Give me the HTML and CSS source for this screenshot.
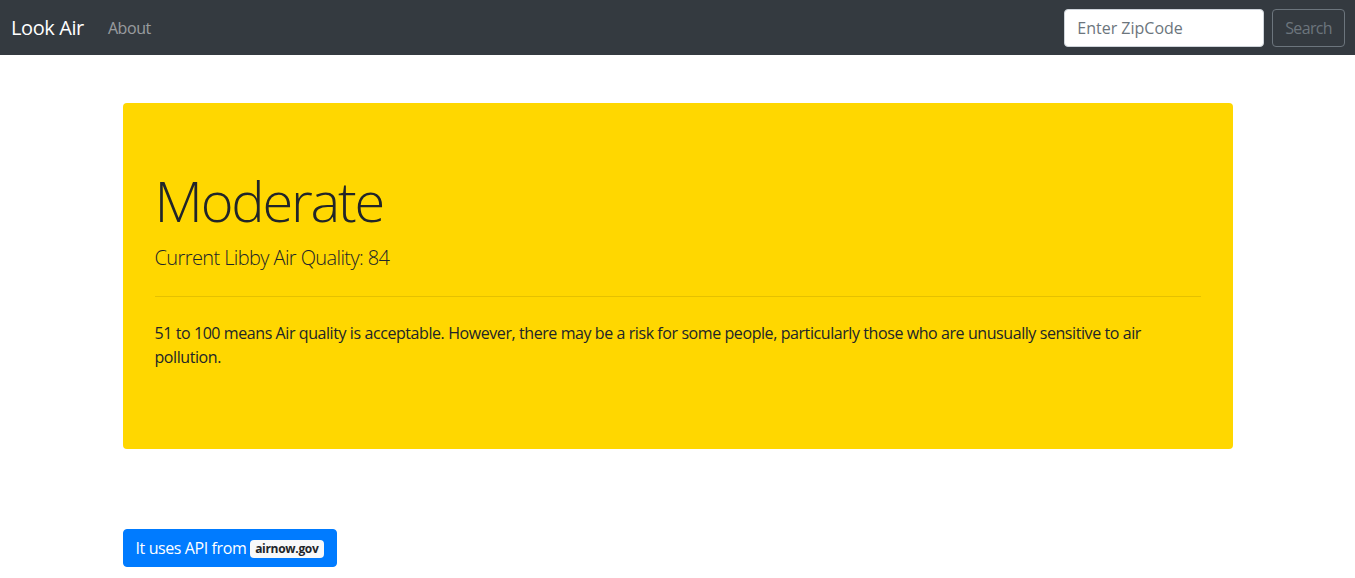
FILE: index.html
```html
<!DOCTYPE html>
<html lang="en">
<head>
<meta charset="utf-8">
<title>Look Air</title>
<link rel="stylesheet" href="styles.css">
</head>
<body>
<nav class="navbar">
  <a class="brand" href="#">Look Air</a>
  <ul class="nav">
    <li><a class="nav-link" href="#">About</a></li>
  </ul>
  <form class="search">
    <input class="zip" type="text" placeholder="Enter ZipCode">
    <button class="btn-search" type="button">Search</button>
  </form>
</nav>
<main class="container">
  <section class="jumbotron">
    <h1 class="display">Moderate</h1>
    <p class="lead">Current Libby Air Quality: 84</p>
    <hr class="divider">
    <p class="desc">51 to 100 means Air quality is acceptable. However, there may be a risk for some people, particularly those who are unusually sensitive to air pollution.</p>
  </section>
  <div class="credits">
    <button class="btn-primary" type="button">It uses API from <span class="badge">airnow.gov</span></button>
  </div>
</main>
</body>
</html>
```
FILE: styles.css
```css
* { box-sizing: border-box; }
html, body {
  margin: 0;
  padding: 0;
}
body {
  font-family: "Open Sans", "Noto Sans", sans-serif;
  font-size: 16px;
  line-height: 1.5;
  color: #212529;
  background: #fff;
  letter-spacing: -0.42px;
}
.navbar {
  display: flex;
  align-items: center;
  background: #343a40;
  padding: 8px 10px;
  height: 55px;
}
.brand {
  color: #fff;
  font-size: 20px;
  line-height: 30px;
  text-decoration: none;
  margin-right: 16px;
  padding-left: 1px;
  letter-spacing: -0.4px;
}
.nav {
  list-style: none;
  margin: 0;
  padding: 0;
  display: flex;
  flex: 1;
}
.nav-link {
  display: block;
  padding: 8px;
  color: rgba(255,255,255,.5);
  text-decoration: none;
}
.search {
  display: flex;
  align-items: center;
  gap: 8px;
}
.zip {
  width: 200px;
  height: 38px;
  padding: 6px 12px;
  font: inherit;
  color: #495057;
  background: #fff;
  border: 1px solid #ced4da;
  border-radius: 4px;
}
.zip::placeholder { color: #6c757d; opacity: 1; }
.btn-search {
  height: 38px;
  padding: 6px 12px;
  font: inherit;
  letter-spacing: -0.65px;
  color: #6c757d;
  background: transparent;
  border: 1px solid #6c757d;
  border-radius: 4px;
}
.container {
  width: 1140px;
  margin: 0 auto;
  padding: 48px 15px 0;
}
.jumbotron {
  background: #ffd700;
  border-radius: 4px;
  padding: 64px 32px;
  margin-bottom: 80px;
}
.display {
  margin: 0 0 8px;
  font-size: 56px;
  font-weight: 300;
  line-height: 1.2;
  letter-spacing: -2.2px;
}
.lead {
  margin: 0;
  font-size: 20px;
  font-weight: 300;
  line-height: 30px;
  letter-spacing: -0.6px;
  position: relative;
  top: 1px;
}
.divider {
  margin: 24px 0;
  border: 0;
  border-top: 1px solid rgba(0,0,0,.1);
}
.desc {
  margin: 0 0 16px;
}
.btn-primary {
  height: 38px;
  padding: 6px 12px;
  font: inherit;
  letter-spacing: -0.4px;
  color: #fff;
  background: #007bff;
  border: 1px solid #007bff;
  border-radius: 4px;
}
.badge {
  display: inline-block;
  padding: 3px 5px;
  font-size: 12px;
  font-weight: 700;
  line-height: 1;
  color: #212529;
  background: #f8f9fa;
  border-radius: 4px;
  vertical-align: 1px;
  letter-spacing: -0.3px;
}
```
